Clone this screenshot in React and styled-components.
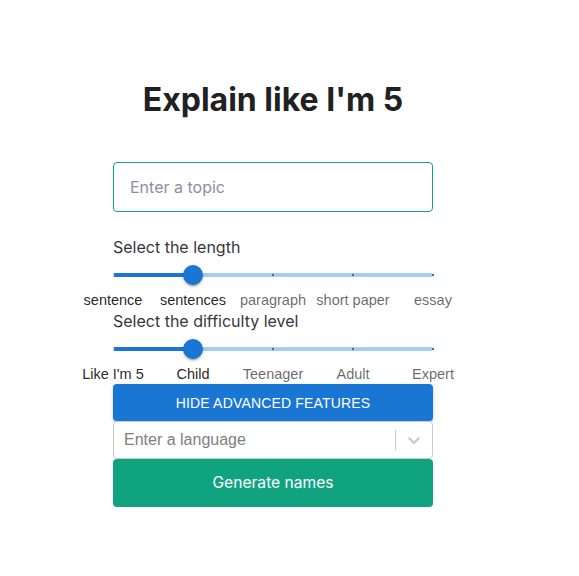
import React from "react";
import styled, { createGlobalStyle } from "styled-components";

const GlobalStyle = createGlobalStyle`
  html, body { margin: 0; padding: 0; background: #ffffff; }
  body { font-family: "Inter", "Liberation Sans", sans-serif; }
  * { box-sizing: border-box; }
`;

const Page = styled.main`
  width: 546px;
  display: flex;
  flex-direction: column;
  align-items: center;
  padding-top: 80px;
`;

const Title = styled.h3`
  margin: 0;
  font-family: "Inter", sans-serif;
  font-size: 32px;
  line-height: 40px;
  font-weight: 700;
  color: #202123;
`;

const Form = styled.form`
  width: 320px;
  margin-top: 42px;
  display: flex;
  flex-direction: column;
`;

const TopicInput = styled.input`
  height: 50px;
  width: 100%;
  padding: 0 16px;
  border: 1px solid #10a37f;
  border-radius: 4px;
  font-family: "Inter", sans-serif;
  font-size: 16px;
  color: #353740;
  outline: none;
  margin-bottom: 23px;
  &::placeholder { color: #8e8ea0; }
`;

const FieldLabel = styled.div`
  font-family: "Inter", sans-serif;
  font-size: 16px;
  line-height: 24px;
  color: #353740;
`;

const SliderBox = styled.div`
  position: relative;
  height: 32px;
  display: flex;
  align-items: center;
`;

const Rail = styled.div`
  width: 100%;
  height: 4px;
  border-radius: 12px;
  background: #a8cbee;
`;

const Track = styled.div`
  position: absolute;
  left: 0;
  top: 14px;
  height: 4px;
  border-radius: 12px;
  background: #1976d2;
`;

const Mark = styled.span`
  position: absolute;
  top: 15px;
  width: 2px;
  height: 2px;
  margin-left: -1px;
  background: ${(p) => (p.$active ? "rgba(255,255,255,0.8)" : "#1976d2")};
`;

const Thumb = styled.span`
  position: absolute;
  top: 6px;
  width: 20px;
  height: 20px;
  margin-left: -10px;
  border-radius: 50%;
  background: #1976d2;
  box-shadow: 0 3px 1px -2px rgba(0,0,0,0.2), 0 2px 2px 0 rgba(0,0,0,0.14), 0 1px 5px 0 rgba(0,0,0,0.12);
`;

const MarkLabels = styled.div`
  width: 400px;
  margin-left: -40px;
  display: grid;
  grid-template-columns: repeat(5, 80px);
  padding-top: 1px;
`;

const MarkLabel = styled.span`
  text-align: center;
  white-space: nowrap;
  font-family: "Liberation Sans", Arial, sans-serif;
  font-size: 14.5px;
  line-height: 17px;
  color: ${(p) => (p.$active ? "rgba(0,0,0,0.87)" : "rgba(0,0,0,0.6)")};
`;

const AdvancedButton = styled.button`
  margin-top: 1px;
  height: 37px;
  width: 100%;
  border: none;
  border-radius: 4px;
  background: #1976d2;
  color: #ffffff;
  font-family: "Liberation Sans", Arial, sans-serif;
  font-size: 14px;
  font-weight: 500;
  letter-spacing: 0.17px;
  text-transform: uppercase;
  box-shadow: 0 3px 1px -2px rgba(0,0,0,0.2), 0 2px 2px 0 rgba(0,0,0,0.14), 0 1px 5px 0 rgba(0,0,0,0.12);
  cursor: pointer;
`;

const SelectControl = styled.div`
  height: 38px;
  display: flex;
  align-items: center;
  border: 1px solid #cccccc;
  border-radius: 4px;
  background: #ffffff;
`;

const SelectValue = styled.div`
  flex: 1;
  padding: 2px 10px;
  font-family: "Liberation Sans", Arial, sans-serif;
  font-size: 16px;
  color: #808080;
`;

const Separator = styled.span`
  align-self: stretch;
  width: 1px;
  margin: 8px 0;
  background: #cccccc;
`;

const Indicator = styled.div`
  padding: 8px;
  display: flex;
  color: #cccccc;
`;

const GenerateButton = styled.button`
  height: 48px;
  width: 100%;
  padding-bottom: 2px;
  border: none;
  border-radius: 4px;
  background: #10a37f;
  color: #ffffff;
  font-family: "Inter", sans-serif;
  font-size: 15.6px;
  cursor: pointer;
`;

function Slider({ label, labels, value }) {
  const pct = (i) => (i / (labels.length - 1)) * 100;
  return (
    <>
      <FieldLabel>{label}</FieldLabel>
      <SliderBox>
        <Rail />
        <Track style={{ width: `${pct(value)}%` }} />
        {labels.map((_, i) => (
          <Mark key={i} $active={i < value} style={{ left: `${pct(i)}%` }} />
        ))}
        <Thumb style={{ left: `${pct(value)}%` }} />
      </SliderBox>
      <MarkLabels>
        {labels.map((l, i) => (
          <MarkLabel key={l} $active={i <= value}>{l}</MarkLabel>
        ))}
      </MarkLabels>
    </>
  );
}

export default function App() {
  return (
    <>
      <GlobalStyle />
      <Page>
        <Title>Explain like I'm 5</Title>
        <Form onSubmit={(e) => e.preventDefault()}>
          <TopicInput type="text" placeholder="Enter a topic" />
          <Slider
            label="Select the length"
            labels={["sentence", "sentences", "paragraph", "short paper", "essay"]}
            value={1}
          />
          <Slider
            label="Select the difficulty level"
            labels={["Like I'm 5", "Child", "Teenager", "Adult", "Expert"]}
            value={1}
          />
          <AdvancedButton type="button">Hide advanced features</AdvancedButton>
          <SelectControl>
            <SelectValue>Enter a language</SelectValue>
            <Separator />
            <Indicator>
              <svg width="20" height="20" viewBox="0 0 20 20" fill="currentColor" aria-hidden="true">
                <path d="M4.516 7.548c0.436-0.446 1.043-0.481 1.576 0l3.908 3.747 3.908-3.747c0.533-0.481 1.141-0.446 1.574 0 0.436 0.445 0.408 1.197 0 1.615-0.406 0.418-4.695 4.502-4.695 4.502-0.217 0.223-0.502 0.335-0.787 0.335s-0.57-0.112-0.789-0.335c0 0-4.287-4.084-4.695-4.502s-0.436-1.17 0-1.615z" />
              </svg>
            </Indicator>
          </SelectControl>
          <GenerateButton type="submit">Generate names</GenerateButton>
        </Form>
      </Page>
    </>
  );
}
